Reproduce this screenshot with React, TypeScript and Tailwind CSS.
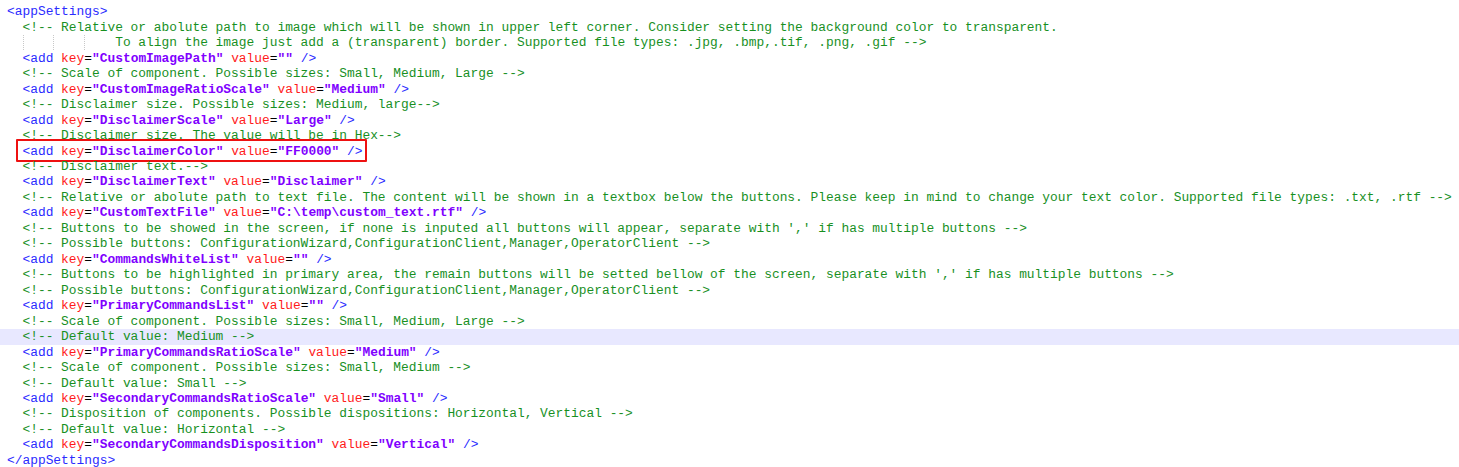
type Line =
  | { kind: "tag"; text: string }
  | { kind: "comment"; text: string }
  | { kind: "wrap"; text: string }
  | { kind: "add"; k: string; v: string };

const lines: Line[] = [
  { kind: "tag", text: "<appSettings>" },
  { kind: "comment", text: "<!-- Relative or abolute path to image which will be shown in upper left corner. Consider setting the background color to transparent." },
  { kind: "wrap", text: "To align the image just add a (transparent) border. Supported file types: .jpg, .bmp,.tif, .png, .gif -->" },
  { kind: "add", k: "CustomImagePath", v: "" },
  { kind: "comment", text: "<!-- Scale of component. Possible sizes: Small, Medium, Large -->" },
  { kind: "add", k: "CustomImageRatioScale", v: "Medium" },
  { kind: "comment", text: "<!-- Disclaimer size. Possible sizes: Medium, large-->" },
  { kind: "add", k: "DisclaimerScale", v: "Large" },
  { kind: "comment", text: "<!-- Disclaimer size. The value will be in Hex-->" },
  { kind: "add", k: "DisclaimerColor", v: "FF0000" },
  { kind: "comment", text: "<!-- Disclaimer text.-->" },
  { kind: "add", k: "DisclaimerText", v: "Disclaimer" },
  { kind: "comment", text: "<!-- Relative or abolute path to text file. The content will be shown in a textbox below the buttons. Please keep in mind to change your text color. Supported file types: .txt, .rtf -->" },
  { kind: "add", k: "CustomTextFile", v: "C:\\temp\\custom_text.rtf" },
  { kind: "comment", text: "<!-- Buttons to be showed in the screen, if none is inputed all buttons will appear, separate with ',' if has multiple buttons -->" },
  { kind: "comment", text: "<!-- Possible buttons: ConfigurationWizard,ConfigurationClient,Manager,OperatorClient -->" },
  { kind: "add", k: "CommandsWhiteList", v: "" },
  { kind: "comment", text: "<!-- Buttons to be highlighted in primary area, the remain buttons will be setted bellow of the screen, separate with ',' if has multiple buttons -->" },
  { kind: "comment", text: "<!-- Possible buttons: ConfigurationWizard,ConfigurationClient,Manager,OperatorClient -->" },
  { kind: "add", k: "PrimaryCommandsList", v: "" },
  { kind: "comment", text: "<!-- Scale of component. Possible sizes: Small, Medium, Large -->" },
  { kind: "comment", text: "<!-- Default value: Medium -->" },
  { kind: "add", k: "PrimaryCommandsRatioScale", v: "Medium" },
  { kind: "comment", text: "<!-- Scale of component. Possible sizes: Small, Medium -->" },
  { kind: "comment", text: "<!-- Default value: Small -->" },
  { kind: "add", k: "SecondaryCommandsRatioScale", v: "Small" },
  { kind: "comment", text: "<!-- Disposition of components. Possible dispositions: Horizontal, Vertical -->" },
  { kind: "comment", text: "<!-- Default value: Horizontal -->" },
  { kind: "add", k: "SecondaryCommandsDisposition", v: "Vertical" },
  { kind: "tag", text: "</appSettings>" },
];

// caret line and the line marked in red
const CURRENT = 21;
const BOXED = 9;

function LineContent({ line }: { line: Line }) {
  if (line.kind === "tag") return <span className="text-[#2b2bff]">{line.text}</span>;
  if (line.kind === "comment")
    return (
      <>
        {"  "}
        <span className="text-[#18901f]">{line.text}</span>
      </>
    );
  if (line.kind === "wrap")
    return (
      <>
        <span className="relative">
          {"              "}
          <span className="absolute left-[15.5px] top-0 h-full border-l border-dotted border-[#c8c8c8]" />
          <span className="absolute left-[46.4px] top-0 h-full border-l border-dotted border-[#c8c8c8]" />
          <span className="absolute left-[77.3px] top-0 h-full border-l border-dotted border-[#c8c8c8]" />
        </span>
        <span className="text-[#18901f]">{line.text}</span>
      </>
    );
  return (
    <>
      {"  "}
      <span className="text-[#2b2bff]">{"<add "}</span>
      <span className="text-[#ff1a1a]">key</span>
      <span className="text-black">=</span>
      <span className="text-[#8000ff] font-bold">"{line.k}"</span>
      <span> </span>
      <span className="text-[#ff1a1a]">value</span>
      <span className="text-black">=</span>
      <span className="text-[#8000ff] font-bold">"{line.v}"</span>
      <span className="text-[#2b2bff]">{" />"}</span>
    </>
  );
}

export default function App() {
  return (
    <div className="w-[1459px] h-[467px] overflow-hidden bg-white pt-[4.3px] font-['Liberation_Mono',monospace] text-[12.88px]">
      {lines.map((line, i) => (
        <div
          key={i}
          className={`relative h-[15.48px] leading-[15.48px] whitespace-pre pl-[7px] ${i === CURRENT ? "bg-[#e8e8ff]" : ""}`}
        >
          <LineContent line={line} />
          {i === BOXED && (
            <div className="absolute left-[16px] top-[-5px] w-[351px] h-[23px] border-2 border-[#ee1111] rounded-[1px]" />
          )}
        </div>
      ))}
    </div>
  );
}
